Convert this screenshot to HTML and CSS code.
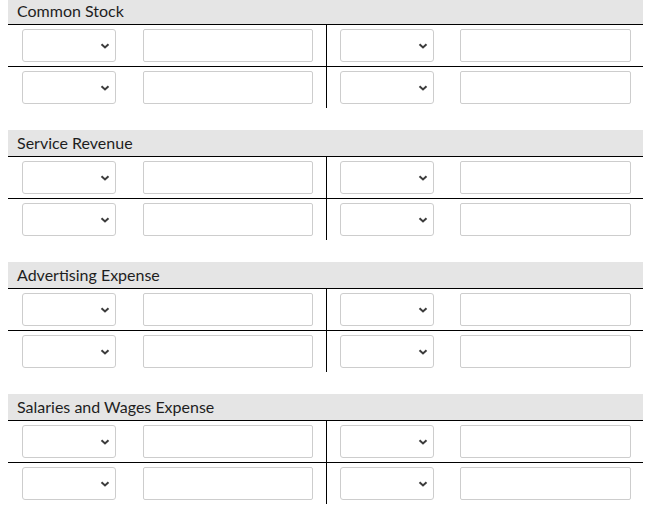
FILE: index.html
```html
<!DOCTYPE html>
<html lang="en">
<head>
    <meta charset="UTF-8">
    <meta name="viewport" content="width=device-width, initial-scale=1.0">
    <title>Journal Entries</title>
    <link rel="stylesheet" href="styles.css">
</head>
<body>
    <div id="ledger">
        <section class="account">
            <div class="account-title">Common Stock</div>
            <div class="entry-row">
                <div class="cell cell-left">
                    <span class="select-wrap"><select></select><svg class="chevron" width="10" height="6" viewBox="0 0 10 6"><path d="M1.5 1.2 L5 4.5 L8.5 1.2"/></svg></span>
                    <input type="text">
                </div>
                <div class="cell cell-right">
                    <span class="select-wrap"><select></select><svg class="chevron" width="10" height="6" viewBox="0 0 10 6"><path d="M1.5 1.2 L5 4.5 L8.5 1.2"/></svg></span>
                    <input type="text">
                </div>
            </div>
            <div class="entry-row">
                <div class="cell cell-left">
                    <span class="select-wrap"><select></select><svg class="chevron" width="10" height="6" viewBox="0 0 10 6"><path d="M1.5 1.2 L5 4.5 L8.5 1.2"/></svg></span>
                    <input type="text">
                </div>
                <div class="cell cell-right">
                    <span class="select-wrap"><select></select><svg class="chevron" width="10" height="6" viewBox="0 0 10 6"><path d="M1.5 1.2 L5 4.5 L8.5 1.2"/></svg></span>
                    <input type="text">
                </div>
            </div>
        </section>

        <section class="account">
            <div class="account-title">Service Revenue</div>
            <div class="entry-row">
                <div class="cell cell-left">
                    <span class="select-wrap"><select></select><svg class="chevron" width="10" height="6" viewBox="0 0 10 6"><path d="M1.5 1.2 L5 4.5 L8.5 1.2"/></svg></span>
                    <input type="text">
                </div>
                <div class="cell cell-right">
                    <span class="select-wrap"><select></select><svg class="chevron" width="10" height="6" viewBox="0 0 10 6"><path d="M1.5 1.2 L5 4.5 L8.5 1.2"/></svg></span>
                    <input type="text">
                </div>
            </div>
            <div class="entry-row">
                <div class="cell cell-left">
                    <span class="select-wrap"><select></select><svg class="chevron" width="10" height="6" viewBox="0 0 10 6"><path d="M1.5 1.2 L5 4.5 L8.5 1.2"/></svg></span>
                    <input type="text">
                </div>
                <div class="cell cell-right">
                    <span class="select-wrap"><select></select><svg class="chevron" width="10" height="6" viewBox="0 0 10 6"><path d="M1.5 1.2 L5 4.5 L8.5 1.2"/></svg></span>
                    <input type="text">
                </div>
            </div>
        </section>

        <section class="account">
            <div class="account-title">Advertising Expense</div>
            <div class="entry-row">
                <div class="cell cell-left">
                    <span class="select-wrap"><select></select><svg class="chevron" width="10" height="6" viewBox="0 0 10 6"><path d="M1.5 1.2 L5 4.5 L8.5 1.2"/></svg></span>
                    <input type="text">
                </div>
                <div class="cell cell-right">
                    <span class="select-wrap"><select></select><svg class="chevron" width="10" height="6" viewBox="0 0 10 6"><path d="M1.5 1.2 L5 4.5 L8.5 1.2"/></svg></span>
                    <input type="text">
                </div>
            </div>
            <div class="entry-row">
                <div class="cell cell-left">
                    <span class="select-wrap"><select></select><svg class="chevron" width="10" height="6" viewBox="0 0 10 6"><path d="M1.5 1.2 L5 4.5 L8.5 1.2"/></svg></span>
                    <input type="text">
                </div>
                <div class="cell cell-right">
                    <span class="select-wrap"><select></select><svg class="chevron" width="10" height="6" viewBox="0 0 10 6"><path d="M1.5 1.2 L5 4.5 L8.5 1.2"/></svg></span>
                    <input type="text">
                </div>
            </div>
        </section>

        <section class="account">
            <div class="account-title">Salaries and Wages Expense</div>
            <div class="entry-row">
                <div class="cell cell-left">
                    <span class="select-wrap"><select></select><svg class="chevron" width="10" height="6" viewBox="0 0 10 6"><path d="M1.5 1.2 L5 4.5 L8.5 1.2"/></svg></span>
                    <input type="text">
                </div>
                <div class="cell cell-right">
                    <span class="select-wrap"><select></select><svg class="chevron" width="10" height="6" viewBox="0 0 10 6"><path d="M1.5 1.2 L5 4.5 L8.5 1.2"/></svg></span>
                    <input type="text">
                </div>
            </div>
            <div class="entry-row">
                <div class="cell cell-left">
                    <span class="select-wrap"><select></select><svg class="chevron" width="10" height="6" viewBox="0 0 10 6"><path d="M1.5 1.2 L5 4.5 L8.5 1.2"/></svg></span>
                    <input type="text">
                </div>
                <div class="cell cell-right">
                    <span class="select-wrap"><select></select><svg class="chevron" width="10" height="6" viewBox="0 0 10 6"><path d="M1.5 1.2 L5 4.5 L8.5 1.2"/></svg></span>
                    <input type="text">
                </div>
            </div>
        </section>
    </div>
</body>
</html>
```

FILE: styles.css
```css
body {
    font-family: 'Lato', 'Liberation Sans', sans-serif;
    color: #1e1e1e;
    background: #fff;
    margin: 0 8px;
}
#ledger {
    margin-top: -2px;
}
.account {
    width: 635px;
    margin-bottom: 22px;
}
.account-title {
    background-color: #e5e5e5;
    height: 26px;
    line-height: 26px;
    padding-left: 9px;
    font-size: 16px;
    border-bottom: 1px solid #000;
}
.entry-row {
    display: grid;
    grid-template-columns: 319px 316px;
}
.entry-row + .entry-row {
    border-top: 1px solid #000;
}
.cell {
    display: flex;
    align-items: center;
    gap: 27px;
    padding: 4px 0 4px 14px;
}
.cell-left {
    border-right: 1px solid #000;
}
.cell-right {
    gap: 26px;
    padding-left: 13px;
}
.select-wrap {
    position: relative;
    display: block;
    width: 94px;
    height: 33px;
}
select {
    appearance: none;
    -webkit-appearance: none;
    display: block;
    box-sizing: border-box;
    width: 94px;
    height: 33px;
    margin: 0;
    border: 1px solid #cdcdcd;
    border-radius: 3px;
    background-color: #fff;
}
.chevron {
    position: absolute;
    right: 6px;
    top: 14px;
    fill: none;
    stroke: #3c3c3c;
    stroke-width: 2;
}
input {
    display: block;
    box-sizing: border-box;
    width: 171px;
    height: 33px;
    margin: 0;
    border: 1px solid #cdcdcd;
    border-radius: 2px;
    background-color: #fff;
}
.cell-left input {
    width: 170px;
}
```
